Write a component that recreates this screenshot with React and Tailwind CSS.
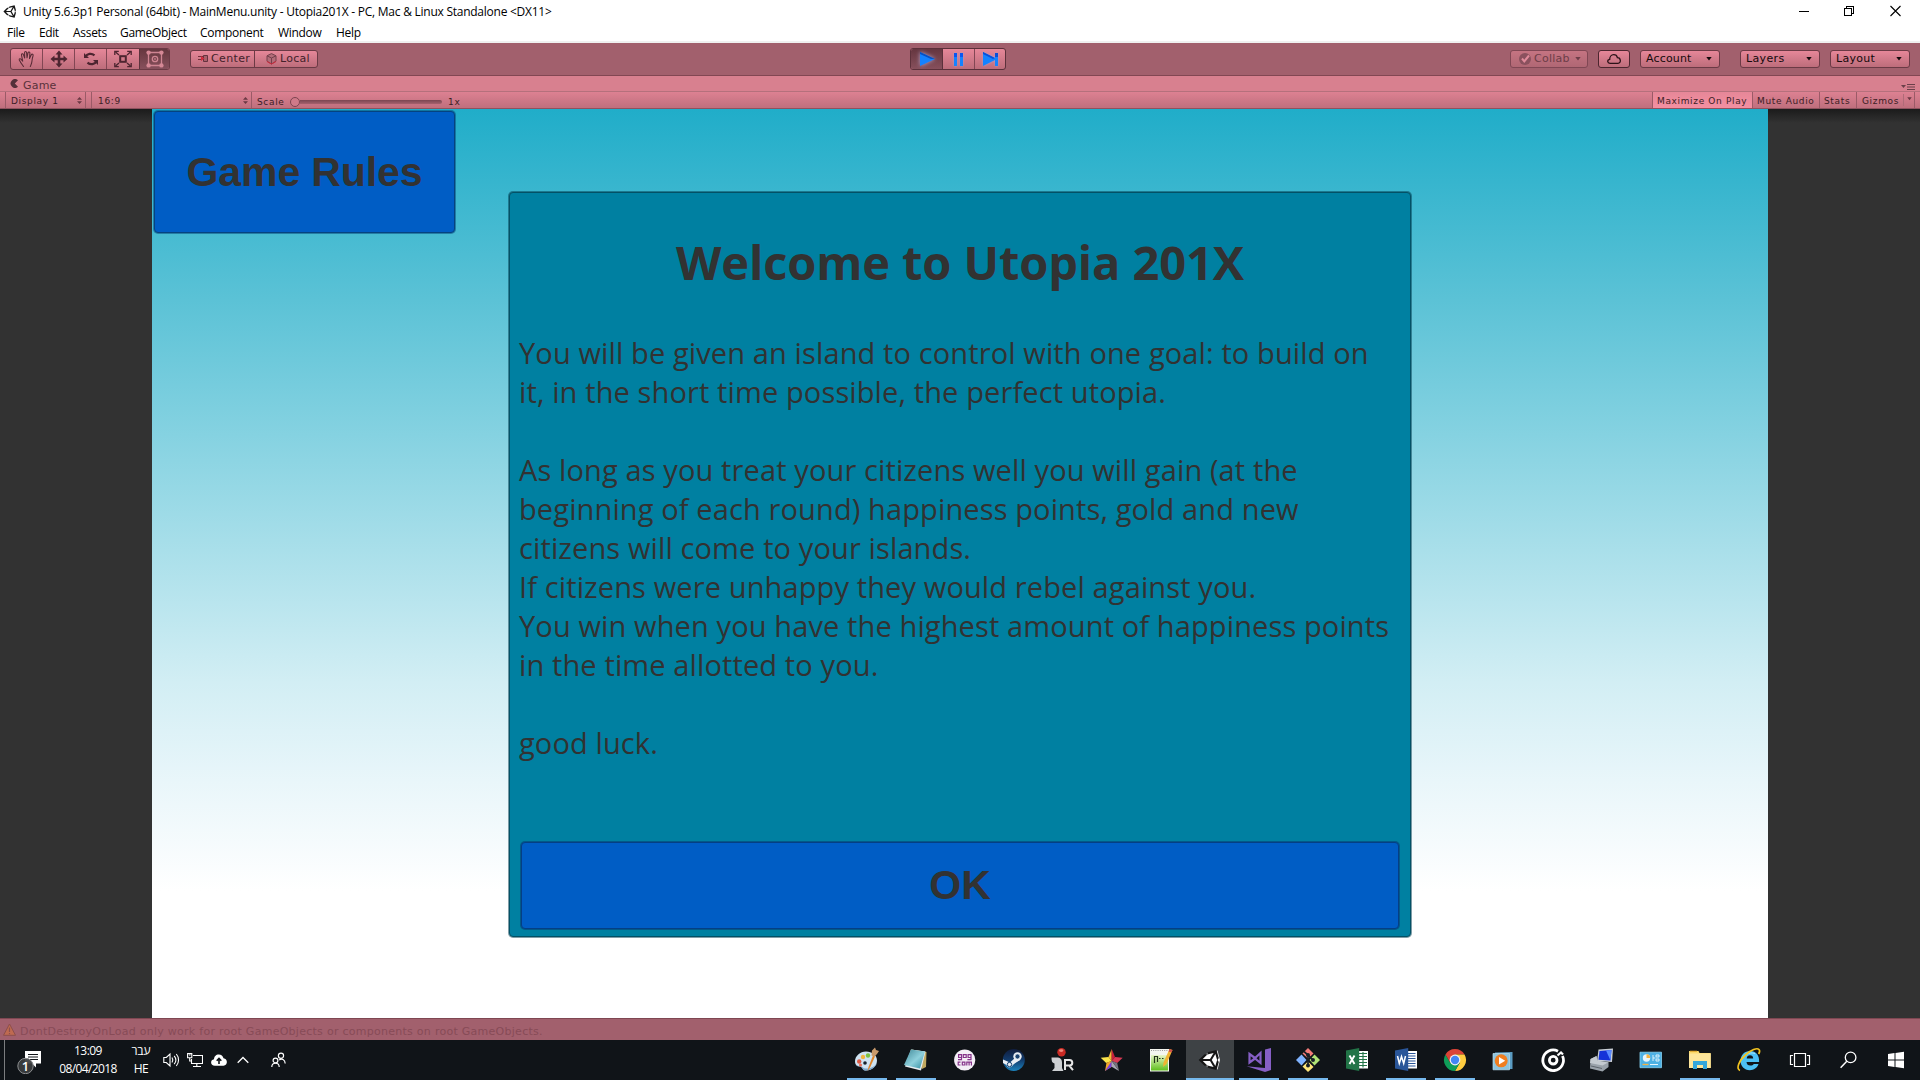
import React from "react";
import { FaUnity } from "react-icons/fa";

const UI = "font-['DejaVu_Sans','Verdana',sans-serif]";
const BTN = "bg-gradient-to-b from-[#e68799] to-[#bd6d7b]";

function UnityMark({ size, className }) {
  return (
    <span className={"relative block " + className}>
      <svg viewBox="0 0 24 24" width={size} height={size} className="block">
        <path d="M2.5 12 9 5.5 19.5 2.5 22 12 19.5 21.5 9 18.5Z" fill="#fff" />
      </svg>
      <FaUnity size={size} className="absolute inset-0 text-[#161616]" />
    </span>
  );
}

function TitleBar() {
  return (
    <div className="flex h-[22px] items-center justify-between bg-white pl-[3px]">
      <div className="flex items-center">
        <UnityMark size={15} className="w-[15px]" />
        <span className="ml-[5px] mt-px whitespace-pre font-['Open_Sans',sans-serif] text-[12px] leading-[22px] tracking-[-0.25px] text-black">
          {"Unity 5.6.3p1 Personal (64bit) - MainMenu.unity - Utopia201X - PC, Mac & Linux Standalone <DX11>"}
        </span>
      </div>
      <div className="flex h-full items-center pr-[19px]">
        <svg width="104" height="12" viewBox="0 0 104 12" fill="none" stroke="#000" shapeRendering="crispEdges">
          <path d="M1 6.500h10M46.500 3.500h7v7h-7zM48.500 3.500v-2h7v7h-2" transform="translate(1 0)" />
          <path d="m93.500 1 10 10m0-10-10 10" shapeRendering="auto" strokeWidth="1.1" />
        </svg>
      </div>
    </div>
  );
}

function MenuBar() {
  const cls = "font-['Open_Sans',sans-serif] text-[12px] leading-[19px] text-black";
  return (
    <div className={"flex h-[19px] bg-white pl-[7px] pt-px " + cls}>
      <span className="w-8 tracking-[-0.3px]">File</span>
      <span className="w-[34px] tracking-[-0.4px]">Edit</span>
      <span className="w-[47px] tracking-[-0.3px]">Assets</span>
      <span className="w-20 tracking-[-0.3px]">GameObject</span>
      <span className="w-[78px] tracking-[-0.3px]">Component</span>
      <span className="w-[58px] tracking-[-0.3px]">Window</span>
      <span className="tracking-[-0.3px]">Help</span>
    </div>
  );
}

function TransformTools() {
  return (
    <div className={"ml-[10px] flex h-[22px] w-[160px] overflow-hidden rounded-[3px] border border-[#6b3a45] text-[#5a2f39] " + BTN}>
      <div className="flex w-[32px] items-center justify-center border-r border-[#824754]">
        <svg width="18" height="18" viewBox="0 0 18 18" fill="none" stroke="#5a2c37" strokeWidth="1.1" strokeLinejoin="round" strokeLinecap="round">
          <path d="M5.500 16.500C4 14.500 2 11.500 1.300 10 .9 8.800 2.300 8.300 3 9.200l1.700 2L3.500 5c-.2-1.400 1.500-1.700 1.900-.4L6.700 8 6.600 2.600c0-1.500 1.900-1.500 2 0L9 7.800l1-5c.3-1.300 2-1 1.900.3L11.500 8.500l1.800-3.700c.6-1.200 2.200-.6 1.800.7-.8 2.500-1 4-1.200 6-.2 2-1 3.500-1.600 5" />
        </svg>
      </div>
      <div className="flex w-[32px] items-center justify-center border-r border-[#824754]">
        <svg width="18" height="18" viewBox="0 0 18 18" fill="#4d2530">
          <path d="M9 .5 12.500 4.500H10.300V7.700H13.500V5.500L17.500 9l-4 3.500v-2.200H10.300v3.200h2.200L9 17.500l-3.500-4h2.200v-3.200H4.500v2.200L.5 9l4-3.500v2.200h3.200V4.500H5.500Z" />
        </svg>
      </div>
      <div className="flex w-[32px] items-center justify-center border-r border-[#824754]">
        <svg width="18" height="18" viewBox="0 0 18 18" fill="none" stroke="#4d2530" strokeWidth="2.2">
          <path d="M3.500 7C5 3.500 9.500 2.800 12.500 5.400M14.500 11c-1.500 3.500-6 4.200-9 1.600" />
          <path d="M2 3v5h5zM16 15v-5h-5z" fill="#4d2530" stroke="none" />
        </svg>
      </div>
      <div className="flex w-[32px] items-center justify-center">
        <svg width="18" height="18" viewBox="0 0 18 18" fill="none" stroke="#4d2530" strokeWidth="1.3">
          <rect x="6.200" y="6.200" width="5.600" height="5.600" strokeWidth="2" />
          <path d="m1.500 2 3.500 3M16.500 2l-3.500 3M1.500 16l3.500-3M16.500 16l-3.500-3" />
          <path d="M.8 5V1.300h4M17.200 5V1.300h-4M.8 13v3.700h4M17.200 13v3.700h-4" />
        </svg>
      </div>
      <div className="flex grow items-center justify-center border-l border-[#5c333d] bg-gradient-to-b from-[#66373f] to-[#87505c]">
        <svg width="18" height="18" viewBox="0 0 18 18" fill="none" stroke="#cf8492" strokeWidth="1.300">
          <path d="M2.500 2.500h13v13h-13z" />
          <circle cx="9" cy="9" r="2.700" />
          <circle cx="9" cy="9" r=".9" fill="#c47c89" stroke="none" />
          <g fill="#d58896" stroke="none">
            <circle cx="2.600" cy="2.600" r="2.200" />
            <circle cx="15.400" cy="2.600" r="2.200" />
            <circle cx="2.600" cy="15.400" r="2.200" />
            <circle cx="15.400" cy="15.400" r="2.200" />
          </g>
        </svg>
      </div>
    </div>
  );
}

function PivotTools() {
  return (
    <div className={"ml-[20px] flex h-[18px] w-[128px] rounded-[3px] border border-[#6b3a45] text-[11px] leading-[16px] text-[#43222a] " + BTN + " " + UI}>
      <div className="flex w-[64px] items-center border-r border-[#6b3a45] pl-[7px]">
        <svg width="10" height="8" viewBox="0 0 10 8" fill="none" stroke="#63333e">
          <path d="M5.500.5h4v6h-4z" fill="#a85f6c" />
          <path d="M0 1.500h5M0 4.500h4" stroke="#74303c" />
          <path d="M3 1 6.500 3.500 3 6Z" fill="#cf2a3c" stroke="none" />
        </svg>
        <span className="ml-[3px] tracking-[0.35px]">Center</span>
      </div>
      <div className="flex items-center pl-[11px]">
        <svg width="11" height="12" viewBox="0 0 11 12" fill="none" stroke="#74404c">
          <path d="M5.500.6 10 2.800v5.400L5.500 11 1 8.200V2.800Z" fill="#b36c79" />
          <path d="M1 2.800 5.500 5 10 2.800M5.500 5v6" />
          <path d="M1 8.500 5.500 11 10 8.500" stroke="#cf2a3c" />
        </svg>
        <span className="ml-[3px] tracking-[0.25px]">Local</span>
      </div>
    </div>
  );
}

function PlayControls() {
  return (
    <div className={"flex h-[22px] w-[96px] overflow-hidden rounded-[3px] border border-[#5c313b] " + BTN}>
      <div className="flex w-[32px] items-center justify-center border-r border-[#5c313b] bg-gradient-to-b from-[#653640] to-[#87505c]">
        <svg width="20" height="20" viewBox="0 0 20 20" className="drop-shadow-[0_0_2px_#b0a0c8]">
          <path d="M3 3v14l15-7z" fill="#1482ff" />
          <path d="M3 3v2l11 5 4 0z" fill="#0a4fc0" />
        </svg>
      </div>
      <div className="flex w-[32px] items-center justify-center border-r border-[#824754]">
        <svg width="20" height="20" viewBox="0 0 20 20" className="drop-shadow-[0_0_1px_#b0a0c8]">
          <path d="M5 4h3v13H5zM11 4h3v13h-3z" fill="#1482ff" />
          <path d="M5 4h3v4H5zM11 4h3v4h-3z" fill="#0a55f0" />
        </svg>
      </div>
      <div className="flex grow items-center justify-center">
        <svg width="20" height="20" viewBox="0 0 20 20" className="drop-shadow-[0_0_1px_#b0a0c8]">
          <path d="M3 3v14l12-6v6h3V4h-3v5z" fill="#1482ff" />
          <path d="M3 3v2l10 5 2-1zM15 4h3v4h-3z" fill="#0a4fd8" />
        </svg>
      </div>
    </div>
  );
}

function Caret({ className }) {
  return (
    <svg width="6" height="4" viewBox="0 0 6 4" className={className}>
      <path d="M.3 0h5.400L3 3.600z" fill="currentColor" />
    </svg>
  );
}

function Toolbar() {
  const pop = "flex h-[18px] items-center justify-between rounded-[3px] border border-[#6b3a45] pl-[5px] pr-[7px] text-[11px] leading-[16px] text-[#150a0c] " + BTN;
  return (
    <div className={"flex h-[32px] items-center bg-[#a2606d] " + UI}>
      <TransformTools />
      <PivotTools />
      <div className="ml-[592px]">
        <PlayControls />
      </div>
      <div className="ml-auto flex pr-[10px]">
        <div className="flex h-[18px] w-[78px] items-center rounded-[3px] border border-[#804754] bg-gradient-to-b from-[#c57482] to-[#b06774] pl-[8px] text-[11px] leading-[16px] text-[#6d3d48]">
          <svg width="12" height="12" viewBox="0 0 12 12">
            <circle cx="6" cy="6" r="6" fill="#8a515e" />
            <path d="m3 5.500 2.300 2.800L10 2.500" fill="none" stroke="#e08b9b" strokeWidth="2" />
          </svg>
          <span className="ml-[3px] tracking-[0.25px]">Collab</span>
          <Caret className="ml-[5px]" />
        </div>
        <div className={"ml-[10px] flex h-[18px] w-[32px] items-center justify-center rounded-[3px] border border-[#4c262f] " + BTN}>
          <svg width="14" height="10" viewBox="0 0 14 10" fill="none" stroke="#2a1218" strokeWidth="1.300">
            <path d="M3 9.300C.2 9.300-.2 5.600 2.700 5.300 2.700 2.900 4.200.7 6.700.7c2 0 3.300 1 3.700 2.900 3.600 0 4 5.700.6 5.700Z" />
          </svg>
        </div>
        <div className={"ml-[10px] w-[80px] " + pop}>
          <span className="tracking-[0.15px]">Account</span>
          <Caret />
        </div>
        <div className={"ml-[20px] w-[80px] " + pop}>
          <span className="tracking-[0.35px]">Layers</span>
          <Caret />
        </div>
        <div className={"ml-[10px] w-[80px] " + pop}>
          <span className="tracking-[0.3px]">Layout</span>
          <Caret />
        </div>
      </div>
    </div>
  );
}

function TabStrip() {
  return (
    <div className={"flex h-[17px] items-center border-b border-t border-b-[#b5707c] border-t-[#824753] bg-[#d8808f] pl-[10px] pr-[5px] " + UI}>
      <svg width="9" height="9" viewBox="0 0 9 9">
        <path d="M8 1.200A4.400 4.400 0 1 0 8 7.800L4.800 4.500Z" fill="#55303a" />
      </svg>
      <span className="ml-[4px] pt-[4px] text-[11px] leading-[14px] tracking-[0.2px] text-[#5a323b]">Game</span>
      <svg width="14" height="6" viewBox="0 0 14 6" className="ml-auto mt-[7px] text-[#6b3f49]">
        <path d="M0 1h5L2.500 4z" fill="currentColor" />
        <path d="M6 .5h8M6 3h8M6 5.500h8" stroke="currentColor" />
      </svg>
    </div>
  );
}

function UpDown({ className }) {
  return (
    <svg width="5" height="7" viewBox="0 0 5 7" className={className}>
      <path d="M2.500 0 5 2.800H0zM2.500 7 5 4.200H0z" fill="#6b3843" />
    </svg>
  );
}

function GameBar() {
  const cell = "flex h-full items-center border-[#9b5a67]";
  return (
    <div className={"flex h-[17px] items-center border-b border-[#8f525e] bg-gradient-to-b from-[#dd8192] to-[#bf6f7d] pl-[5px] pr-[5px] text-[9px] leading-[16px] tracking-[0.65px] text-[#3c1d25] " + UI}>
      <div className={cell + " w-[81px] border-l border-r pl-[5px] pr-[3px]"}>
        <span className="pt-[2px]">Display 1</span>
        <UpDown className="ml-auto mt-px" />
      </div>
      <div className={cell + " ml-[5px] w-[161px] border-l border-r pl-[6px] pr-[3px]"}>
        <span className="pt-[2px]">16:9</span>
        <UpDown className="ml-auto mt-px" />
      </div>
      <span className="ml-[5px] mt-[4px] w-[33px] whitespace-nowrap">Scale</span>
      <div className="mt-[3px] flex w-[152px] items-center">
        <div className="size-[10px] shrink-0 rounded-full border border-[#7d4551] bg-[#cf7a89]" />
        <div className="h-[4px] grow rounded-r-sm bg-gradient-to-b from-[#7b4551] to-[#a5606d]" />
      </div>
      <span className="mt-[4px] pl-[6px]">1x</span>
      <div className="ml-auto flex h-full">
        <div className={cell + " w-[100px] whitespace-nowrap border-l bg-gradient-to-b from-[#e68798] to-[#f48fa1] pl-[4px] pt-[2px]"}>Maximize On Play</div>
        <div className={cell + " w-[67px] whitespace-nowrap border-l pl-[4px] pt-[2px]"}>Mute Audio</div>
        <div className={cell + " w-[37px] border-l pl-[4px] pt-[2px]"}>Stats</div>
        <div className={cell + " w-[59px] border-l border-r pl-[5px]"}>
          <span className="w-[41px] pt-[2px]">Gizmos</span>
          <span className="flex h-[12px] items-center border-l border-[#b06b78] pl-[3px] text-[#6b3843]">
            <Caret className="mb-[3px] w-[5px]" />
          </span>
        </div>
      </div>
    </div>
  );
}

function Dialog() {
  const p = "whitespace-pre text-[29px] leading-[39px] tracking-[0.12px]";
  return (
    <div className="mt-[83px] flex h-[745px] w-[902px] flex-col rounded-[4px] border border-[#035166] bg-[#0080a1] px-[9px] text-[#323232] shadow-[0_0_0_1px_rgba(0,60,80,0.5)]">
      <div className="mt-[34px] h-[70px] text-center font-['Open_Sans',sans-serif] text-[47px] font-bold leading-[70px] tracking-[-0.1px]">Welcome to Utopia 201X</div>
      <div className="mt-[36px] font-['Open_Sans',sans-serif]">
        <p className={p}>You will be given an island to control with one goal: to build on</p>
        <p className={p}>it, in the short time possible, the perfect utopia.</p>
        <p className={p + " mt-[39px]"}>As long as you treat your citizens well you will gain (at the</p>
        <p className={p}>beginning of each round) happiness points, gold and new</p>
        <p className={p}>citizens will come to your islands.</p>
        <p className={p}>If citizens were unhappy they would rebel against you.</p>
        <p className={p}>You win when you have the highest amount of happiness points</p>
        <p className={p}>in the time allotted to you.</p>
        <p className={p + " mt-[39px]"}>good luck.</p>
      </div>
      <button className="mb-[7px] ml-[2px] mt-auto flex h-[87px] w-[878px] items-center justify-center rounded-[4px] border border-[#043f84] bg-[#005dc5] font-['Liberation_Sans',Arial,sans-serif] text-[41px] font-bold leading-none shadow-[0_0_0_1px_rgba(4,63,120,0.6)]">
        OK
      </button>
    </div>
  );
}

function GameView() {
  return (
    <div className="flex h-[909px] bg-[linear-gradient(to_bottom,#1b1b1b_0px,#323232_14px)]">
      <div className="relative ml-[152px] flex w-[1616px] justify-center bg-[linear-gradient(to_bottom,#20adc9_0%,#5bc2d6_21%,#7dcfdf_33%,#d2eef4_63%,#e9f6fa_74%,#ffffff_86%)]">
        <button className="absolute left-[2px] top-[2px] h-[122px] w-[301px] rounded-[4px] border border-[#05437f] bg-[#005dc5] pt-[2px] font-['Liberation_Sans',Arial,sans-serif] text-[41px] font-bold tracking-[-0.12px] text-[#323232] shadow-[0_0_0_1px_rgba(4,63,120,0.5)]">
          Game Rules
        </button>
        <Dialog />
      </div>
    </div>
  );
}

function StatusBar() {
  return (
    <div className={"flex h-[22px] items-center border-t border-[#7f4752] bg-[#a2606d] pl-[3px] " + UI}>
      <svg width="13" height="13" viewBox="0 0 13 13">
        <path d="M6.500 1 12.500 12.300H.5Z" fill="#bf6a50" stroke="#8c4f4c" strokeLinejoin="round" />
        <path d="M6.500 4.500V9M6.500 10v1.300" stroke="#8c4f4c" strokeWidth="1.200" />
      </svg>
      <span className="ml-[4px] mt-[5px] whitespace-pre text-[11px] leading-[16px] tracking-[0.27px] text-[#874b57]">
        DontDestroyOnLoad only work for root GameObjects or components on root GameObjects.
      </span>
    </div>
  );
}

function Icon({ children }) {
  return (
    <svg width="24" height="24" viewBox="0 0 24 24" className="block overflow-visible">
      {children}
    </svg>
  );
}

const Paint = () => (
  <Icon>
    <path d="M11 3.500c6 0 11 3.500 11 9s-5 10-11 10c-3.500 0-3-2.500-4.500-3.500S0 19 0 13.500s5-10 11-10Z" fill="#cfe3f2" />
    <path d="M11 22.500c6 0 10-4 11-8-2 4-6 6-11 6-3 0-3-1.500-5-2s-4 0-5-2c1 3 4 1.500 5.500 3s1 3 4.500 3Z" fill="#7fa8cc" />
    <circle cx="4.200" cy="13.500" r="2.200" fill="#e05a45" />
    <circle cx="8" cy="9" r="2.200" fill="#f0b440" />
    <circle cx="13" cy="7.500" r="2.200" fill="#7cc242" />
    <circle cx="10" cy="15" r="1.800" fill="#16202a" />
    <circle cx="5.500" cy="17" r="1.600" fill="#e8705a" />
    <path d="m12.500 23 1-4 4.500-11.500 2 1-5 11Z" fill="#e0862a" />
    <path d="m16.500 7.500.5-5 3-3 1 2.500 3 1-2 3-2.500 2.500Z" fill="#c99a6b" />
  </Icon>
);
const Notepad = () => (
  <Icon>
    <path d="m7.500 1.500 15 2.500-.5 15-4 2Z" fill="#c0a860" />
    <path d="m7 1.500 14.500 2L17 22.500 1 18.500Z" fill="#e6edf0" />
    <path d="M7 1.500 21 3.500 16 20.500 0 17Z" fill="url(#np)" />
    <defs>
      <linearGradient id="np" x1="0" y1="0" x2="1" y2="1">
        <stop offset="0" stopColor="#3f8797" />
        <stop offset=".55" stopColor="#8ed0dc" />
        <stop offset="1" stopColor="#2f8ba0" />
      </linearGradient>
    </defs>
  </Icon>
);
const Gog = () => (
  <Icon>
    <circle cx="11.700" cy="12" r="10.600" fill="#f4eef6" />
    <g fill="none" stroke="#86328a" strokeWidth="1.200">
      <path d="M8.500 9.500H5.600V6.600h2.900v5H5M13.200 6.600h-2.900v2.900h2.900zM18 9.500h-2.900V6.600H18v5h-3.600" />
      <path d="M7.500 14.100H5.200V17h2.300M11.900 14.100H9.300V17h2.600zM13.800 17.500v-3.400h4.600v3.400M16.100 14v3.500" />
    </g>
  </Icon>
);
const Steam = () => (
  <Icon>
    <defs>
      <linearGradient id="st" x1="0" y1="0" x2="0" y2="1">
        <stop offset="0" stopColor="#101d3e" />
        <stop offset=".5" stopColor="#123c6d" />
        <stop offset="1" stopColor="#1b83bd" />
      </linearGradient>
    </defs>
    <circle cx="11.800" cy="12" r="11" fill="url(#st)" />
    <path d="M1 11.500 8 14.500l5.500-5L18 12l-6 4-3 3c-2 1-4 0-4.500-2L1 15Z" fill="#e8eef4" />
    <circle cx="15.500" cy="8.500" r="4.200" fill="#e8eef4" />
    <circle cx="15.500" cy="8.500" r="2.400" fill="#17406f" stroke="#e8eef4" strokeWidth=".5" />
    <circle cx="7.500" cy="16.500" r="2.200" fill="none" stroke="#17406f" />
  </Icon>
);
const RApp = () => (
  <Icon>
    <path d="M.5 9.500h5c4 0 5.500 2 5.500 5V20l1.500 3H1l2.500-3v-4.500C1 15 .5 13 .5 9.500Z" fill="#cdd0d3" />
    <circle cx="10.500" cy="4.200" r="4.200" fill="#c92a24" />
    <ellipse cx="10.200" cy="2.600" rx="2.200" ry="1.300" fill="#ee8a7c" />
    <path d="M14 22V12h4.500a2.800 2.800 0 0 1 0 5.600H14m4.300 0 3.700 4.600" fill="none" stroke="#e6e6e6" strokeWidth="2" />
  </Icon>
);
const Star = () => (
  <Icon>
    <path d="M11.700 1 8.500 9 11.700 13Z" fill="#f6b83a" />
    <path d="M11.700 1 15 9l-3.300 4Z" fill="#c8203c" />
    <path d="M.7 9.700 8.500 9l3.200 4-5.500 2Z" fill="#fbe44a" />
    <path d="m22.700 9.700-7.700-.7-3.300 4 5.500 2Z" fill="#d83a54" />
    <path d="m5 23 1.500-8.300 5.200-1.700v5.700Z" fill="#f2a62c" />
    <path d="m5 23 6.700-4.300V13Z" fill="#7a3fe0" />
    <path d="m19 23-7.300-4.300V13Z" fill="#a9a9b4" />
    <path d="m19 23-1.800-8-5.500-2Z" fill="#77757f" />
  </Icon>
);
const Npp = () => (
  <Icon>
    <path d="M1 1h19v22.500H1z" fill="#f4f6f0" />
    <path d="M2 7h17v15.500H2z" fill="url(#nppg)" />
    <defs>
      <linearGradient id="nppg" x1="0" y1="0" x2="0" y2="1">
        <stop offset="0" stopColor="#e8f6c8" />
        <stop offset="1" stopColor="#5fbf1e" />
      </linearGradient>
    </defs>
    <path d="M2 2.500h17" stroke="#9a9a9a" strokeDasharray="1 1.200" />
    <path d="M5.500 8v7M5.500 8.500h3V14M10 10.500h1.500M13 10.500h1.500" fill="none" stroke="#24331c" strokeWidth="1.200" />
    <path d="m20.500 1 3 1-6 14-3.500 3 .5-4.500Z" fill="#f0b432" />
    <path d="m20.500 1 3 1-1 2.500-3-1Z" fill="#d0524a" />
  </Icon>
);
const VisualStudio = () => (
  <Icon>
    <path d="M18 1.500 24 0v22l-6 2L-.5 18.200 18 20Z" fill="#865fc5" />
    <path d="m2.500 6 5.500 4 5.500-5v10L8 10.500l-5.500 4Z" fill="none" stroke="#865fc5" strokeWidth="2.200" />
  </Icon>
);
const GitBash = () => (
  <Icon>
    <path d="m12 0 5.500 5.500-5.500 5-5.500-5Z" fill="#f27b78" />
    <path d="M0 12 5.500 6.500l5 5.500-5 5.500Z" fill="#80b3ff" />
    <path d="m24 12-5.500-5.500-5 5.500 5 5.500Z" fill="#b0e375" />
    <path d="m12 24-5.500-5.500 5.500-5 5.500 5.500Z" fill="#ffe67a" />
    <path d="M12 6v12M8 3.500l4 3.500 5 5" stroke="#191f26" strokeWidth="1.700" fill="none" />
    <g fill="#191f26">
      <circle cx="12" cy="7" r="2" />
      <circle cx="17" cy="12" r="2" />
      <circle cx="12" cy="17.500" r="2" />
    </g>
  </Icon>
);
const Excel = () => (
  <Icon>
    <path d="M13 3h10v17.500H13z" fill="#fff" />
    <path d="M14 5.500h8M14 8.500h8M14 11.500h8M14 14.500h8M14 17.500h8M18 4v15.500" stroke="#227447" strokeWidth="1.100" />
    <path d="M1 2.500 14.200 0v23L1 20.500Z" fill="#227447" />
    <path d="m4.500 7.500 5 8.500m0-8.500-5 8.500" stroke="#fff" strokeWidth="1.900" />
  </Icon>
);
const Word = () => (
  <Icon>
    <path d="M13 3h10v17.500H13z" fill="#fff" />
    <path d="M14 5.500h7.500M14 8h7.500M14 10.500h7.500M14 13h7.500M14 15.500h7.500M14 18h7.500" stroke="#2a5699" strokeWidth="1.100" />
    <path d="M1 2.500 14.200 0v23L1 20.500Z" fill="#2a5699" />
    <path d="m3.500 8 1.800 7.500L7.500 8.500l2.200 7L11.500 8" fill="none" stroke="#fff" strokeWidth="1.500" />
  </Icon>
);
const Chrome = () => (
  <Icon>
    <path d="M12 12 2.470 6.500A11 11 0 0 1 21.530 6.500L12 6.500Z" fill="#db4437" />
    <path d="M12 12V6.500h9.530A11 11 0 0 1 12 23l4.760-8.250Z" fill="#ffcd40" />
    <path d="M12 12l4.760 2.750L12 23A11 11 0 0 1 2.470 6.500l4.770 8.250Z" fill="#0f9d58" />
    <path d="M2.470 6.500 7.240 14.750 12 6.500Z" fill="#db4437" />
    <circle cx="12" cy="12" r="5.400" fill="#f1f1f1" />
    <circle cx="12" cy="12" r="4.200" fill="#4285f4" />
  </Icon>
);
const MediaPlayer = () => (
  <Icon>
    <path d="M3 4.500 20.500 4v17L3 21.500Z" fill="#5b9cc2" />
    <path d="M1 5.500h16.500v16.300H1z" fill="#8ec4dd" stroke="#b9deec" strokeWidth=".7" />
    <circle cx="9.200" cy="12.800" r="6.500" fill="#f07e1f" />
    <path d="M7 9v7.600l6.200-3.800Z" fill="#fff" />
  </Icon>
);
const Groove = () => (
  <Icon>
    <path d="M17 3.200A10.300 10.300 0 1 0 21.500 8" fill="none" stroke="#fff" strokeWidth="2.800" />
    <circle cx="12.200" cy="12.200" r="3.800" fill="none" stroke="#fff" strokeWidth="2.800" />
    <path d="M16.500 7.500 20 4.500l2 2" stroke="#fff" strokeWidth="2.200" fill="none" />
  </Icon>
);
const Computer = () => (
  <Icon>
    <path d="m8.500 1.500 14.500-1-1 13.500-15-1Z" fill="#c9cfd6" />
    <path d="m9.500 3 12-1-1 10.500-12-.7Z" fill="#1633d8" />
    <path d="m16 2.500 5.500-.5-1 10.500Z" fill="#5b8cff" />
    <path d="m.5 11 6-3 1 5 11 1v5l-6 4.500L0 20.500Z" fill="#9aa2aa" />
    <path d="m.5 11 6-3 .8 4.500 10.700 2-5.500 3L0 15Z" fill="#c4cad0" />
    <path d="m1 18 11 2.500" stroke="#5f666e" />
  </Icon>
);
const ControlPanel = () => (
  <Icon>
    <path d="M1 4.200h21.500v15.500H1z" fill="#4db1e4" stroke="#86d2f2" strokeWidth=".8" />
    <circle cx="7.500" cy="10" r="3.700" fill="#e8f6fc" />
    <path d="M7.500 10V6.300a3.700 3.700 0 0 1 3.700 3.700Z" fill="#f5b342" />
    <path d="M14 7v6M14 10h2.500M17 7h3v2h-3zM17 11h3v2h-3z" stroke="#e8f6fc" fill="none" strokeWidth=".9" />
    <path d="M3.500 16.500h6" stroke="#f5b342" strokeWidth="1.300" />
    <path d="M11 16.500h8" stroke="#e8f6fc" />
  </Icon>
);
const Explorer = () => (
  <Icon>
    <path d="M1 3h9.500l1 2H22.700v15H1z" fill="#fbd96e" />
    <path d="M1 5.500h21.700V20H1z" fill="#fee69b" />
    <path d="M2 3.200h7" stroke="#d99b1d" />
    <path d="M5 21v-8h14v8h-4v-4H9v4Z" fill="#35a7dc" />
  </Icon>
);
const InternetExplorer = () => (
  <Icon>
    <path d="M21.500 16c-1.300 4-4.800 6.200-8.700 6.200-5.500 0-9.300-4-9.300-9.400 0-5.600 4-9.800 9.600-9.800 6 0 9.500 4.600 9 11H9.500c.2 2.300 1.600 3.600 3.800 3.600 1.700 0 2.800-.6 3.400-1.600ZM9.700 10.500h6.500c-.1-2-1.300-3.200-3.200-3.200s-3 1.200-3.300 3.200Z" fill="#4cc0f4" />
    <path d="M4.500 12C7 6.500 12 3.700 18 5.500" fill="none" stroke="#a9e4fb" strokeWidth="1" />
    <path d="M3 22.500C-1.500 21 2 12.500 9 6.500 14 2 20-.5 22 1.500c1 1 .5 3-.3 4.500" fill="none" stroke="#f3c420" strokeWidth="1.700" />
  </Icon>
);
const TaskView = () => (
  <Icon>
    <path d="M8.500 5.500h11v13h-11zM7 7.500H4.500v9H7M21 7.500h2.500v9H21" fill="none" stroke="#fff" strokeWidth="1.200" />
  </Icon>
);
const Search = () => (
  <Icon>
    <circle cx="15.600" cy="9.400" r="5.300" fill="none" stroke="#fff" strokeWidth="1.300" />
    <path d="m11.800 13.300-6.200 6.500" stroke="#fff" strokeWidth="1.500" />
  </Icon>
);
const WindowsLogo = () => (
  <Icon>
    <path d="m4 6 6.500-.9v6.400H4ZM11.500 5 20 3.800v7.700h-8.500ZM4 12.500h6.500v6.400L4 18ZM11.500 12.500H20v7.700L11.500 19Z" fill="#fff" />
  </Icon>
);

const APPS = [
  { icon: Paint, open: true },
  { icon: Notepad, open: true },
  { icon: Gog },
  { icon: Steam },
  { icon: RApp },
  { icon: Star },
  { icon: Npp },
  { icon: () => <UnityMark size={24} className="w-6" />, active: true },
  { icon: VisualStudio, open: true },
  { icon: GitBash, open: true },
  { icon: Excel },
  { icon: Word, open: true },
  { icon: Chrome, open: true },
  { icon: MediaPlayer },
  { icon: Groove },
  { icon: Computer },
  { icon: ControlPanel },
  { icon: Explorer, open: true },
  { icon: InternetExplorer },
  { icon: TaskView },
  { icon: Search },
  { icon: WindowsLogo },
];

function Taskbar() {
  return (
    <div className="flex h-[40px] justify-between bg-[#101418] font-['Open_Sans',sans-serif] text-[12px] text-white">
      <div className="ml-[4px] flex items-center border-l border-[#7b7d7f]">
        <svg width="26" height="28" viewBox="0 0 26 28" className="ml-[11px]">
          <path d="M9 5h16v12.500h-5v4l-4-4H9Z" fill="#fff" />
          <path d="M12 8.500h10M12 11h10M12 13.500h10" stroke="#101418" />
          <circle cx="9.500" cy="20" r="7.700" fill="#3a3d40" fillOpacity=".93" stroke="#8a8c8e" />
          <text x="9.500" y="24.500" textAnchor="middle" fontSize="13" fontWeight="600" fill="#fff">1</text>
        </svg>
        <div className="ml-[16px] flex w-[60px] flex-col items-center leading-[18px]">
          <span className="tracking-[-0.55px]">13:09</span>
          <span className="tracking-[-0.6px]">08/04/2018</span>
        </div>
        <div className="ml-[10px] flex w-[26px] flex-col items-center leading-[18px]">
          <span className="tracking-[-0.1px]">עבר</span>
          <span className="tracking-[-0.5px]">HE</span>
        </div>
        <svg width="17" height="16" viewBox="0 0 17 16" fill="none" stroke="#fff" strokeWidth="1.100" className="ml-[9px]">
          <path d="M.8 5.500h2.500L7 2v12l-3.700-3.500H.8ZM9 5.500c1 1.500 1 3.500 0 5M11.200 3.800c2 2.500 2 6 0 8.400M13.300 2c3 3.500 3 8.500 0 12" />
        </svg>
        <svg width="16" height="16" viewBox="0 0 16 16" fill="none" stroke="#fff" strokeWidth="1.100" className="ml-[7px]">
          <path d="M6 3.500h9.500v8H4.500V7M9.800 11.500v3M6 14.500h8M.6 1.600h4.200v4.200H.6zM2.700 5.800V9h2" />
          <path d="M2 3h1.500" />
        </svg>
        <svg width="16" height="12" viewBox="0 0 16 12" className="ml-[8px]">
          <path d="M4 11.700C-1 11.700-1 5.800 3 5.300 3 2.500 5 .4 7.800.4c2.400 0 4.200 1.500 4.700 3.900 4.500.3 4.500 7.400 0 7.400Z" fill="#fff" />
          <path d="M8 10V5M5.700 6.800 8 4.500l2.300 2.300" fill="none" stroke="#101418" strokeWidth="1.600" />
        </svg>
        <svg width="12" height="8" viewBox="0 0 12 8" fill="none" stroke="#fff" strokeWidth="1.300" className="ml-[10px]">
          <path d="m.7 6.800 5.300-5.300 5.300 5.300" />
        </svg>
        <svg width="15" height="16" viewBox="0 0 15 16" fill="none" stroke="#fff" strokeWidth="1.200" className="ml-[22px]">
          <circle cx="4.500" cy="8.500" r="2.400" />
          <path d="M.8 15c0-5 7.400-5 7.400 0" />
          <circle cx="10" cy="3.700" r="2.600" />
          <path d="M8.200 8c2.500-2 5.800-.5 6 3.500" />
        </svg>
      </div>
      <div className="flex gap-px">
        {APPS.map(({ icon: AppIcon, open, active }, i) => (
          <div key={i} className={active ? "flex w-12 flex-col items-center justify-between bg-[#3e4245] pt-2" : "flex w-12 flex-col items-center justify-between pt-2"}>
            <AppIcon />
            {active && <div className="h-[2px] w-full bg-[#76b9ed]" />}
            {open && <div className="h-[2px] w-10 bg-[#76b9ed]" />}
          </div>
        ))}
      </div>
    </div>
  );
}

export default function App() {
  return (
    <div className="flex h-[1080px] w-[1920px] flex-col overflow-hidden bg-white">
      <TitleBar />
      <MenuBar />
      <div className="h-[2px] bg-[#f0f0f0]" />
      <Toolbar />
      <TabStrip />
      <GameBar />
      <GameView />
      <StatusBar />
      <Taskbar />
    </div>
  );
}
